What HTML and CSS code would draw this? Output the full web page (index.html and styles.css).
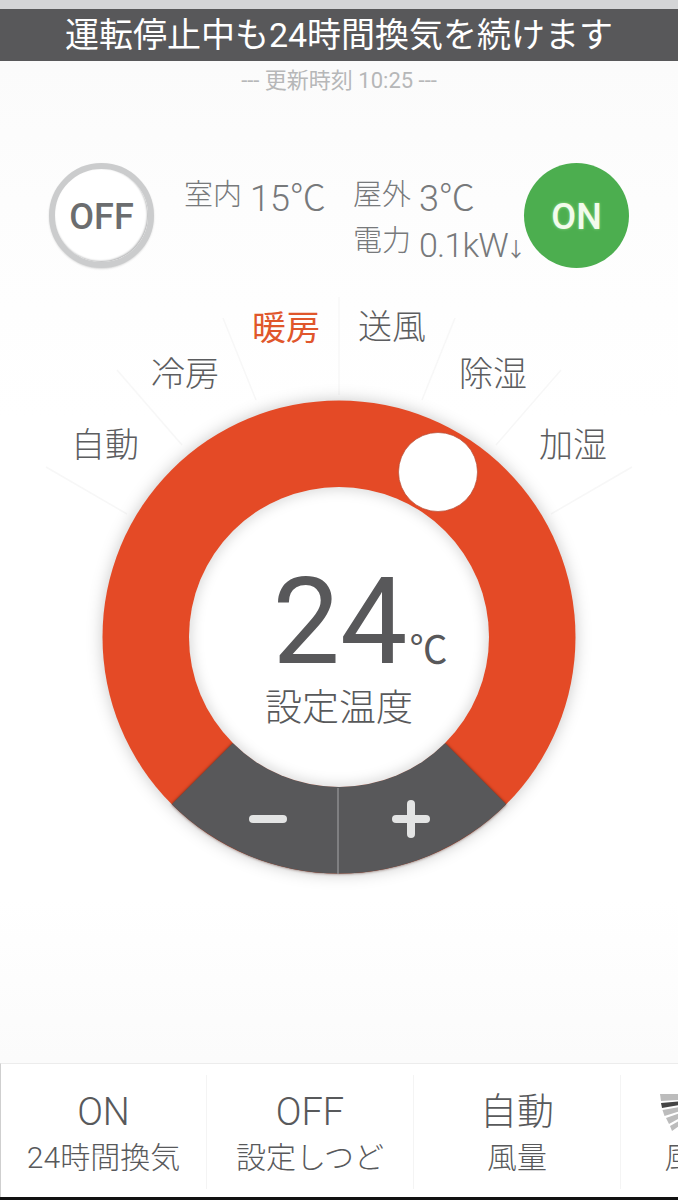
FILE: index.html
```html
<!DOCTYPE html>
<html lang="ja">
<head>
<meta charset="utf-8">
<title>エアコン</title>
<link rel="stylesheet" href="styles.css">
</head>
<body>
<div class="page">
  <div class="status-strip"></div>
  <div class="banner">運転停止中も24時間換気を続けます</div>
  <div class="updated">--- 更新時刻 10:25 ---</div>
  <div class="status-row">
    <button class="power power-off">OFF</button>
    <div class="readings">
      <div class="reading"><span class="r-label">室内</span><span class="r-value">15℃</span></div>
      <div class="reading"><span class="r-label">屋外</span><span class="r-value">3℃</span></div>
      <div class="reading reading-power"><span class="r-label">電力</span><span class="r-value r-value-small">0.1kW<span class="arrow">↓</span></span></div>
    </div>
    <button class="power power-on">ON</button>
  </div>
  <div class="dial">
    <svg class="dial-art" width="678" height="795" viewBox="0 268 678 795">
      <defs>
        <clipPath id="innerClip"><circle cx="339" cy="637" r="150"/></clipPath>
      </defs>
      <g class="spokes">
        <line x1="339" y1="297" x2="339" y2="395"/>
        <line x1="223" y1="318" x2="256" y2="400"/>
        <line x1="455" y1="318" x2="422" y2="400"/>
        <line x1="117" y1="370" x2="182" y2="445"/>
        <line x1="561" y1="370" x2="496" y2="445"/>
        <line x1="46" y1="467" x2="127" y2="514"/>
        <line x1="632" y1="467" x2="551" y2="514"/>
      </g>
      <circle class="ring" cx="339" cy="637" r="236.5"/>
      <path class="sector" d="M171.8 804.2 L233 743 A150 150 0 0 0 445 743 L506.2 804.2 A236.5 236.5 0 0 1 171.8 804.2 Z"/>
      <circle class="inner" cx="339" cy="637" r="150"/>
      <g clip-path="url(#innerClip)">
        <circle class="inner-shade" cx="339" cy="637" r="154"/>
      </g>
      <line class="divider" x1="338" y1="788" x2="338" y2="874"/>
      <line class="sign" x1="253" y1="819" x2="283" y2="819"/>
      <line class="sign" x1="396" y1="819" x2="426" y2="819"/>
      <line class="sign" x1="411" y1="804" x2="411" y2="834"/>
      <circle class="knob" cx="438" cy="472" r="39.5"/>
    </svg>
    <span class="mode mode-auto">自動</span>
    <span class="mode mode-cool">冷房</span>
    <span class="mode mode-heat">暖房</span>
    <span class="mode mode-fan">送風</span>
    <span class="mode mode-dry">除湿</span>
    <span class="mode mode-humid">加湿</span>
    <div class="readout">
      <div class="temp"><span class="temp-num">24</span><span class="temp-unit">℃</span></div>
      <div class="temp-label">設定温度</div>
    </div>
  </div>
  <div class="footer">
    <div class="cell"><div class="cell-top cell-latin">ON</div><div class="cell-sub">24時間換気</div></div>
    <div class="cell"><div class="cell-top cell-latin">OFF</div><div class="cell-sub">設定しつど</div></div>
    <div class="cell"><div class="cell-top">自動</div><div class="cell-sub">風量</div></div>
    <div class="cell cell-last">
      <div class="cell-top">
        <svg class="vane" width="132" height="38" viewBox="0 0 132 38">
          <polygon class="vane-light" points="1,0 20,0 20,6 2,7"/>
          <polygon class="vane-dark" points="2,9 20,7.5 20,11 3,14"/>
          <polygon class="vane-light" points="3.5,16 20,13 20,17.5 5.5,22"/>
          <polygon class="vane-light" points="7,24 20,19.5 20,24.5 10,30"/>
          <polygon class="vane-light" points="11,32 20,27 20,32 13,37"/>
        </svg>
      </div>
      <div class="cell-sub">風向上下</div>
    </div>
  </div>
  <div class="bottom-edge"></div>
</div>
</body>
</html>
```
FILE: styles.css
```css
* { box-sizing: border-box; }
html, body { margin: 0; padding: 0; }
body {
  width: 678px;
  height: 1200px;
  overflow: hidden;
  background: #fff;
  font-family: Roboto, "Noto Sans CJK JP", sans-serif;
  color: #666769;
}
.page {
  width: 678px;
  height: 1200px;
  display: flex;
  flex-direction: column;
  background: linear-gradient(180deg, #fafafa 0, #fdfdfd 200px, #fff 420px, #fff 900px, #fbfbfb 1060px);
}
.status-strip { height: 9px; flex: none; background: #d4d5d7; }
.banner {
  height: 52px;
  flex: none;
  background: #58585a;
  color: #fff;
  font-size: 34px;
  line-height: 52px;
  text-align: center;
  white-space: nowrap;
}
.updated {
  height: 40px;
  flex: none;
  font-size: 22px;
  line-height: 40px;
  text-align: center;
  color: #b6b7b8;
}
.status-row {
  height: 167px;
  flex: none;
  padding: 62px 49px 0 49px;
  display: flex;
  align-items: flex-start;
}
.power {
  width: 105px;
  height: 105px;
  flex: none;
  padding: 3px 0 0;
  border-radius: 50%;
  font-family: Roboto, sans-serif;
  font-size: 36px;
  font-weight: 500;
  line-height: 1;
}
.power-off {
  border: 6px solid #cbcccd;
  background: #fff;
  color: #6b6d6f;
  box-shadow: inset -1px -1px 2px #b4b5b6, 0 1px 2px #d8d8d8;
}
.power-on {
  border: 0;
  background: #4cae4f;
  color: #f2fbec;
  text-shadow: 0 0 3px #8fdc8a;
}
.readings {
  width: 370px;
  flex: none;
  display: grid;
  grid-template-columns: 169px 1fr;
  padding: 10px 0 0 30px;
}
.reading {
  display: flex;
  align-items: flex-start;
  white-space: nowrap;
  height: 46px;
}
.reading-power { grid-column: 2; }
.r-label {
  font-size: 29px;
  line-height: 40px;
  color: #77797b;
  font-weight: 300;
  width: 66px;
  flex: none;
  margin-top: 2px;
}
.r-value {
  font-size: 36px;
  line-height: 40px;
  font-weight: 300;
  color: #77797b;
  margin-top: 6px;
}
.r-value-small { font-size: 34px; letter-spacing: -0.8px; }
.arrow { font-size: 20px; font-weight: 400; margin-left: -2px; }
.dial { flex: 1; position: relative; }
.dial-art { display: block; }
.spokes line { stroke: #f7f7f7; stroke-width: 1.5; }
.ring { fill: #e44a26; filter: drop-shadow(0 0 8px rgba(0,0,0,.22)); }
.sector { fill: #58585a; filter: drop-shadow(0 0 1.5px rgba(60,20,10,.7)); }
.inner { fill: #fff; }
.inner-shade { fill: none; stroke: rgba(0,0,0,.24); stroke-width: 8; filter: blur(7px); }
.divider { stroke: #8c8d8f; stroke-width: 1.5; }
.sign { stroke: #e3e4e4; stroke-width: 8; stroke-linecap: round; }
.knob { fill: #fff; stroke: #b5503a; stroke-width: .7; }
.mode {
  position: absolute;
  font-size: 34px;
  font-weight: 300;
  line-height: 40px;
  white-space: nowrap;
  color: #5c5d5f;
}
.mode-auto { left: 71px; top: 157px; }
.mode-cool { left: 151px; top: 86px; }
.mode-heat { left: 252px; top: 40px; color: #e0562b; font-weight: 400; }
.mode-fan { left: 358px; top: 39px; }
.mode-dry { left: 459px; top: 86px; }
.mode-humid { left: 539px; top: 157px; }
.readout {
  position: absolute;
  left: 189px;
  top: 219px;
  width: 300px;
  height: 300px;
  display: flex;
  flex-direction: column;
  align-items: center;
  padding-top: 71px;
}
.temp { display: flex; align-items: baseline; height: 129px; padding-left: 42px; }
.temp-num { font-size: 120px; line-height: 129px; color: #58585a; }
.temp-unit { font-size: 38px; line-height: 40px; color: #58585a; margin-left: 2px; }
.temp-label { font-size: 37px; font-weight: 300; line-height: 44px; color: #58595b; }
.footer {
  height: 134px;
  flex: none;
  display: flex;
  overflow: hidden;
  background: #fff;
  border-top: 1px solid #ececec;
  border-left: 1px solid #cfcfcf;
}
.cell {
  width: 207px;
  flex: none;
  margin: 11px 0 8px;
  padding-top: 13px;
  text-align: center;
  border-right: 1px solid #f4f4f4;
  white-space: nowrap;
}
.cell:first-child { width: 206px; }
.cell-last { border-right: 0; }
.cell-top {
  height: 49px;
  font-size: 37px;
  font-weight: 300;
  line-height: 49px;
  color: #58595b;
  display: flex;
  justify-content: center;
  align-items: center;
}
.cell-latin { font-size: 38px; }
.cell-sub { font-size: 30px; font-weight: 300; line-height: 42px; color: #58595b; }
.vane { display: block; }
.vane-light { fill: #bcbcbc; }
.vane-dark { fill: #444; }
.bottom-edge { height: 3px; flex: none; background: #111; }
```
